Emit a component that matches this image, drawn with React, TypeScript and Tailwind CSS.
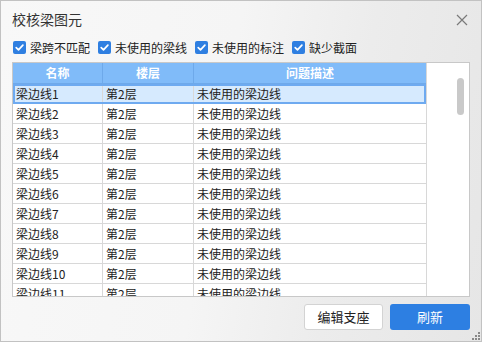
import React from "react";

const rows = Array.from({ length: 11 }, (_, i) => ({
  name: `梁边线${i + 1}`,
  floor: "第2层",
  desc: "未使用的梁边线",
}));

function Check({ label }: { label: string }) {
  return (
    <div className="flex items-center gap-[4px]">
      <div className="w-[13px] h-[13px] rounded-[2px] bg-[#2f7fe1] flex items-center justify-center">
        <svg width="11" height="11" viewBox="0 0 11 11">
          <path d="M2.2 5.6 L4.5 7.9 L8.9 3.2" fill="none" stroke="#fff" strokeWidth="1.7" strokeLinecap="round" strokeLinejoin="round" />
        </svg>
      </div>
      <span className="text-[12px] leading-[16px] text-[#222]">{label}</span>
    </div>
  );
}

export default function App() {
  return (
    <div
      className="w-[482px] h-[342px] border border-[#c2c2c2] flex flex-col bg-[linear-gradient(100deg,#f8f8f8_0%,#f5f5f5_45%,#ececec_70%,#e6e6e6_100%)] relative overflow-hidden"
      style={{ fontFamily: '"Noto Sans CJK SC", "Noto Sans", sans-serif' }}
    >
      <div className="h-[37px] flex items-center justify-between pl-[11px] pr-[13px] shrink-0">
        <span className="text-[14px] text-[#333]">校核梁图元</span>
        <svg width="12" height="12" viewBox="0 0 12 12">
          <path d="M1 1 L11 11 M11 1 L1 11" stroke="#7a7a7a" strokeWidth="1.2" />
        </svg>
      </div>
      <div className="h-[19px] flex items-center gap-[8px] pl-[12px] shrink-0">
        <Check label="梁跨不匹配" />
        <Check label="未使用的梁线" />
        <Check label="未使用的标注" />
        <Check label="缺少截面" />
      </div>
      <div className="mt-[5px] ml-[11px] w-[458px] h-[235px] border border-[#c8c8c8] bg-white flex shrink-0 overflow-hidden">
        <div className="w-[413px] flex flex-col shrink-0">
          <div className="h-[21px] flex bg-[#80bbf9] text-white text-[12px] font-semibold border-b border-[#6ea9ea] shrink-0">
            <div className="w-[90px] border-r border-[#6ea9ea] flex items-center justify-center">名称</div>
            <div className="w-[91px] border-r border-[#6ea9ea] flex items-center justify-center">楼层</div>
            <div className="flex-1 flex items-center justify-center">问题描述</div>
          </div>
          {rows.map((r, i) => (
            <div
              key={i}
              className={
                i === 0
                  ? "h-[20px] flex text-[12px] text-[#222] bg-[#d6eafe] border-2 border-[#6eaaf0] shrink-0"
                  : "h-[20px] flex text-[12px] text-[#222] border-b border-[#d8d8d8] shrink-0"
              }
            >
              <div className={i === 0 ? "w-[88px] border-r border-[#d8d8d8] flex items-center pl-[1px]" : "w-[90px] border-r border-[#d8d8d8] flex items-center pl-[3px]"}>{r.name}</div>
              <div className="w-[91px] border-r border-[#d8d8d8] flex items-center pl-[3px]">{r.floor}</div>
              <div className="flex-1 flex items-center pl-[3px]">{r.desc}</div>
            </div>
          ))}
        </div>
        <div className="flex-1 border-l border-[#d8d8d8] relative">
          <div className="absolute left-[30px] top-[15px] w-[7px] h-[37px] rounded-full bg-[#c9c9c9]" />
        </div>
      </div>
      <div className="mt-[7px] flex justify-end gap-[7px] pr-[11px] shrink-0">
        <button className="w-[79px] h-[26px] rounded-[3px] bg-white border border-[#d3d3d3] text-[13px] text-[#222]">编辑支座</button>
        <button className="w-[80px] h-[26px] rounded-[3px] bg-[#2d7fe2] text-[13px] text-white">刷新</button>
      </div>
      <svg className="absolute right-[1px] bottom-[1px]" width="8" height="8" viewBox="0 0 8 8">
        <rect x="6" y="0" width="2" height="2" fill="#888" />
        <rect x="3" y="3" width="2" height="2" fill="#888" />
        <rect x="6" y="3" width="2" height="2" fill="#888" />
        <rect x="0" y="6" width="2" height="2" fill="#888" />
        <rect x="3" y="6" width="2" height="2" fill="#888" />
        <rect x="6" y="6" width="2" height="2" fill="#888" />
      </svg>
    </div>
  );
}
